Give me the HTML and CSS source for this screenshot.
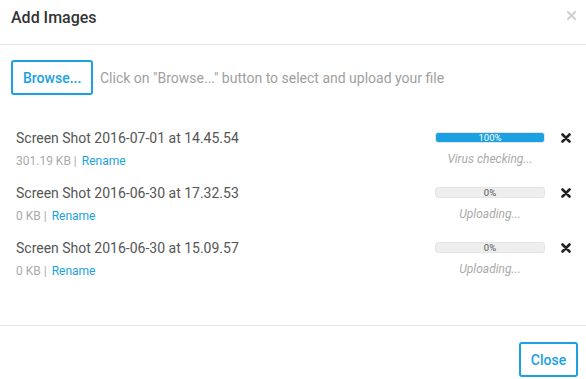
FILE: index.html
```html
<!DOCTYPE html>
<html>
<head>
<meta charset="utf-8">
<link rel="stylesheet" href="styles.css">
</head>
<body>
<div class="dialog">
  <div class="header">
    <h1 class="title">Add Images</h1>
    <svg class="dismiss" width="9" height="9" viewBox="0 0 9 9"><path d="M1 1L8 8M8 1L1 8" stroke="#cfcfcf" stroke-width="2" stroke-linecap="square"/></svg>
  </div>
  <div class="content">
    <div class="browse-row">
      <button class="btn">Browse...</button>
      <span class="hint">Click on "Browse..." button to select and upload your file</span>
    </div>
    <div class="files">
      <div class="file">
        <div class="info">
          <div class="name">Screen Shot 2016-07-01 at 14.45.54</div>
          <div class="meta"><span class="size">301.19 KB |</span> <a class="link">Rename</a></div>
        </div>
        <div class="progress">
          <div class="bar"><div class="fill" style="width:100%"></div><span class="pct on">100%</span></div>
          <div class="status">Virus checking...</div>
        </div>
        <svg class="remove" width="10" height="10" viewBox="0 0 10 10"><path d="M1.5 1.5L8.5 8.5M8.5 1.5L1.5 8.5" stroke="#222" stroke-width="2.6" stroke-linecap="round"/></svg>
      </div>
      <div class="file">
        <div class="info">
          <div class="name">Screen Shot 2016-06-30 at 17.32.53</div>
          <div class="meta"><span class="size">0 KB |</span> <a class="link">Rename</a></div>
        </div>
        <div class="progress">
          <div class="bar"><div class="fill" style="width:0%"></div><span class="pct">0%</span></div>
          <div class="status">Uploading...</div>
        </div>
        <svg class="remove" width="10" height="10" viewBox="0 0 10 10"><path d="M1.5 1.5L8.5 8.5M8.5 1.5L1.5 8.5" stroke="#222" stroke-width="2.6" stroke-linecap="round"/></svg>
      </div>
      <div class="file">
        <div class="info">
          <div class="name">Screen Shot 2016-06-30 at 15.09.57</div>
          <div class="meta"><span class="size">0 KB |</span> <a class="link">Rename</a></div>
        </div>
        <div class="progress">
          <div class="bar"><div class="fill" style="width:0%"></div><span class="pct">0%</span></div>
          <div class="status">Uploading...</div>
        </div>
        <svg class="remove" width="10" height="10" viewBox="0 0 10 10"><path d="M1.5 1.5L8.5 8.5M8.5 1.5L1.5 8.5" stroke="#222" stroke-width="2.6" stroke-linecap="round"/></svg>
      </div>
    </div>
  </div>
  <div class="footer">
    <button class="btn close">Close</button>
  </div>
</div>
</body>
</html>
```
FILE: styles.css
```css
* { box-sizing: border-box; }
html, body { margin: 0; padding: 0; background: #fff; }
body { font-family: Roboto, "Noto Sans", sans-serif; color: #555; width: 586px; height: 379px; overflow: hidden; }
.dialog { display: flex; flex-direction: column; height: 379px; }
.header { height: 45px; border-bottom: 1px solid #e6e6e6; display: flex; align-items: flex-start; justify-content: space-between; padding: 8px 10px 0 11px; }
.title { margin: 0; font-size: 16px; line-height: 19px; font-weight: 500; color: #333; }
.dismiss { margin-top: 3px; }
.content { flex: 1; padding: 15px 0 0 0; }
.browse-row { display: flex; align-items: center; padding-left: 11px; }
.btn { font-family: Roboto, sans-serif; font-size: 14px; font-weight: 500; color: #1ba1e2; background: #fff; border: 2px solid #1ba1e2; border-radius: 3px; height: 35px; padding: 0 10px; cursor: pointer; }
.browse-row .btn { width: 82px; }
.hint { margin-left: 7px; font-size: 14px; color: #a0a0a0; }
.files { padding-top: 34px; }
.file { display: flex; align-items: flex-start; height: 55px; padding-left: 16px; padding-right: 15px; }
.info { flex: 1; }
.name { font-size: 14px; color: #555; line-height: 18px; }
.meta { font-size: 12px; line-height: 14px; margin-top: 7px; }
.size { color: #aaa; }
.link { color: #1ba1e2; margin-left: 2px; }
.progress { width: 110px; display: flex; flex-direction: column; align-items: center; padding-top: 3px; }
.bar { position: relative; width: 110px; height: 11px; background: #eeeeee; border: 1px solid #e4e4e4; border-radius: 3px; overflow: hidden; }
.fill { height: 100%; background: #1ba1e2; }
.pct { position: absolute; left: 0; right: 0; top: -1px; text-align: center; font-size: 9.5px; line-height: 11px; color: #555; }
.pct.on { color: #fff; }
.status { font-size: 12px; font-style: italic; color: #aaa; margin-top: 9px; line-height: 14px; }
.remove { margin-left: 16px; margin-top: 4px; }
.footer { height: 54px; border-top: 1px solid #e6e6e6; display: flex; justify-content: flex-end; align-items: flex-start; padding: 16px 8px 0 0; }
.close { width: 59px; padding: 0; }
```
